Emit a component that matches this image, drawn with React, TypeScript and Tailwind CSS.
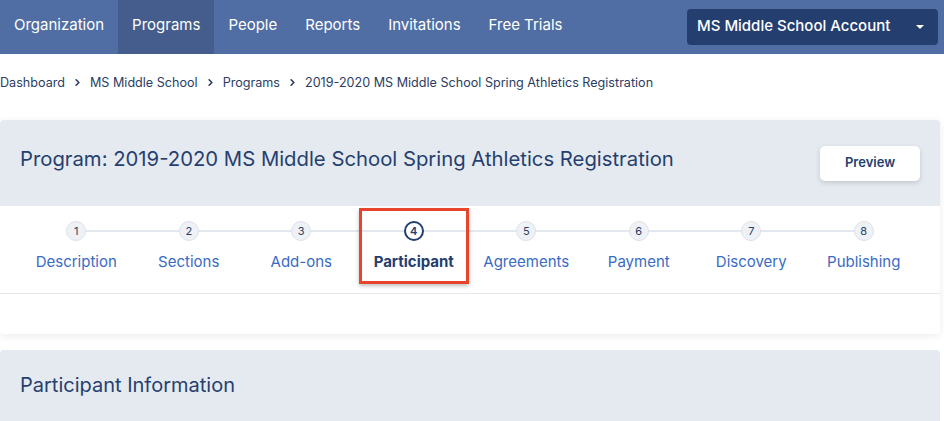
import { ChevronRight } from 'lucide-react';

const navItems = ['Organization', 'Programs', 'People', 'Reports', 'Invitations', 'Free Trials'];
const crumbs = ['Dashboard', 'MS Middle School', 'Programs', '2019-2020 MS Middle School Spring Athletics Registration'];
const steps = ['Description', 'Sections', 'Add-ons', 'Participant', 'Agreements', 'Payment', 'Discovery', 'Publishing'];

export default function App() {
  return (
    <div className="w-[944px] h-[421px] overflow-hidden bg-white" style={{ fontFamily: 'Inter, "Noto Sans", sans-serif' }}>
      {/* Top nav */}
      <nav className="h-[54px] bg-[#506ea3] flex items-stretch pr-[6px]">
        <div className="flex items-stretch">
          {navItems.map((item) => (
            <div
              key={item}
              className={`flex items-center px-[14px] pb-[3px] text-[15px] text-white ${item === 'Programs' ? 'bg-[#445d8c]' : ''}`}
            >
              {item}
            </div>
          ))}
        </div>
        <div className="ml-auto flex items-center">
          <div className="w-[251px] h-[36px] rounded-[4px] bg-[#243e6f] flex items-center pl-[10px] pr-[14px] pb-[1px] text-white text-[15px] font-medium">
            MS Middle School Account
            <span className="ml-auto w-0 h-0 border-l-[4px] border-r-[4px] border-t-[4px] border-l-transparent border-r-transparent border-t-white" />
          </div>
        </div>
      </nav>

      {/* Breadcrumb */}
      <div className="h-[56px] flex items-center text-[12.6px] text-[#2b3d63] pt-[2px]">
        {crumbs.map((c, i) => (
          <div key={c} className="flex items-center">
            <span>{c}</span>
            {i < crumbs.length - 1 && (
              <ChevronRight className="w-[11px] h-[11px] mx-[7px] text-[#2b3d63]" strokeWidth={3.5} />
            )}
          </div>
        ))}
      </div>

      {/* Program card */}
      <div className="mt-[10px] w-[940px] rounded-[4px] bg-white shadow-[0_2px_8px_rgba(0,0,0,0.08)]">
        <div className="h-[86px] bg-[#e5eaf1] rounded-t-[4px] flex items-center px-[20px]">
          <h1 className="text-[20.3px] text-[#25406e] pb-[8px]">
            Program: 2019-2020 MS Middle School Spring Athletics Registration
          </h1>
          <button className="ml-auto w-[100px] h-[35px] rounded-[5px] bg-white shadow-[0_2px_5px_rgba(0,0,0,0.15)] text-[13px] font-semibold text-[#25406e]">
            Preview
          </button>
        </div>

        {/* Steps */}
        <div className="relative px-[20px] h-[88px] border-b border-[#e3e7ee]">
          <div className="absolute left-[76px] right-[76px] top-[24px] h-[2px] bg-[#e3e7ee]" />
          <div className="relative grid grid-cols-8 h-full">
            {steps.map((s, i) => {
              const active = s === 'Participant';
              return (
                <div key={s} className="flex flex-col items-center pt-[15px]">
                  <div
                    className={`w-[20px] h-[20px] rounded-full flex items-center justify-center text-[11px] ${
                      active
                        ? 'bg-white border-2 border-[#243e6f] text-[#243e6f] font-semibold'
                        : 'bg-[#eef1f6] border border-[#dde2ea] text-[#2b3d63]'
                    }`}
                  >
                    {i + 1}
                  </div>
                  <div
                    className={`mt-[10px] text-[15px] ${active ? 'font-bold text-[#243e6f]' : 'text-[#3a6bc4]'}`}
                  >
                    {s}
                  </div>
                  {active && (
                    <div className="absolute top-[2px] w-[110px] h-[76px] border-[3px] border-[#e8432d] shadow-[0_2px_4px_rgba(0,0,0,0.25)]" />
                  )}
                </div>
              );
            })}
          </div>
        </div>
        <div className="h-[40px]" />
      </div>

      {/* Participant Information */}
      <div className="mt-[16px] w-[940px] h-[80px] rounded-t-[4px] bg-[#e5eaf1] px-[20px] pt-[20px]">
        <h2 className="text-[20px] text-[#25406e]">Participant Information</h2>
      </div>
    </div>
  );
}
